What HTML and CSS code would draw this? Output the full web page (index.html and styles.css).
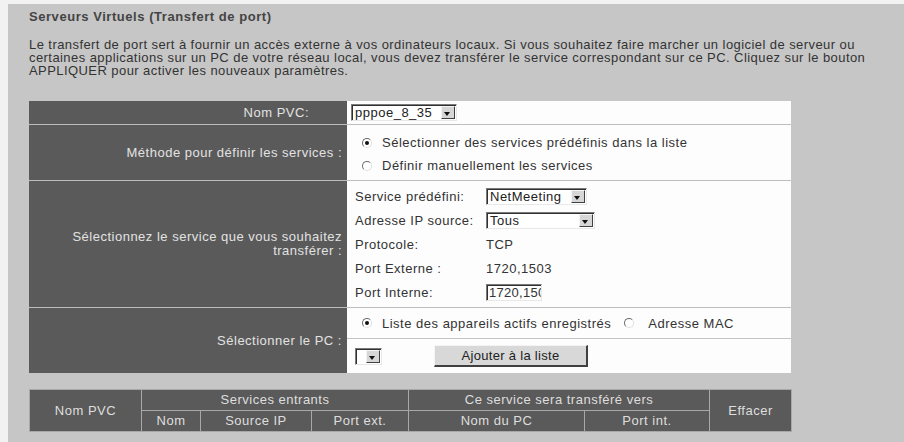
FILE: index.html
```html
<!DOCTYPE html>
<html lang="fr">
<head>
<meta charset="utf-8">
<title>Serveurs Virtuels</title>
<link rel="stylesheet" href="styles.css">
</head>
<body>
<div class="page">
  <h1 class="title">Serveurs Virtuels (Transfert de port)</h1>
  <p class="intro">Le transfert de port sert à fournir un accès externe à vos ordinateurs locaux. Si vous souhaitez faire marcher un logiciel de serveur ou certaines applications sur un PC de votre réseau local, vous devez transférer le service correspondant sur ce PC. Cliquez sur le bouton APPLIQUER pour activer les nouveaux paramètres.</p>

  <div class="form">
    <div class="lbl lbl-pvc">Nom PVC:</div>
    <div class="val val-pvc">
      <span class="sel sel-pvc"><span class="sel-text">pppoe_8_35</span><span class="arrow"></span></span>
    </div>

    <div class="lbl">Méthode pour définir les services :</div>
    <div class="val val-method">
      <label class="radio-line"><span class="radio on"></span>Sélectionner des services prédéfinis dans la liste</label>
      <label class="radio-line"><span class="radio"></span>Définir manuellement les services</label>
    </div>

    <div class="lbl">Sélectionnez le service que vous souhaitez<br>transférer :</div>
    <div class="val val-service">
      <span>Service prédéfini:</span>
      <span><span class="sel sel-svc"><span class="sel-text">NetMeeting</span><span class="arrow"></span></span></span>
      <span>Adresse IP source:</span>
      <span><span class="sel sel-ip"><span class="sel-text">Tous</span><span class="arrow"></span></span></span>
      <span>Protocole:</span>
      <span>TCP</span>
      <span>Port Externe :</span>
      <span>1720,1503</span>
      <span>Port Interne:</span>
      <span><span class="input">1720,1503</span></span>
    </div>

    <div class="lbl">Sélectionner le PC :</div>
    <div class="val val-pc">
      <div class="pc-top">
        <label class="radio-line"><span class="radio on"></span>Liste des appareils actifs enregistrés</label>
        <label class="radio-line mac"><span class="radio"></span>Adresse MAC</label>
      </div>
      <div class="pc-bottom">
        <span class="sel sel-pc"><span class="sel-text"></span><span class="arrow"></span></span>
        <span class="btn">Ajouter à la liste</span>
      </div>
    </div>
  </div>

  <table class="list">
    <colgroup>
      <col class="c1"><col class="c2"><col class="c3"><col class="c4"><col class="c5"><col class="c6"><col class="c7">
    </colgroup>
    <tr>
      <th rowspan="2">Nom PVC</th>
      <th colspan="3">Services entrants</th>
      <th colspan="2">Ce service sera transféré vers</th>
      <th rowspan="2">Effacer</th>
    </tr>
    <tr>
      <th>Nom</th>
      <th>Source IP</th>
      <th>Port ext.</th>
      <th>Nom du PC</th>
      <th>Port int.</th>
    </tr>
  </table>
</div>
</body>
</html>
```

FILE: styles.css
```css
html, body {
  margin: 0;
  padding: 0;
  height: 100%;
  background: #f2f2f2;
  overflow: hidden;
}

body {
  padding: 4px 0 0 8px;
  box-sizing: border-box;
  font-family: "Liberation Sans", Arial, sans-serif;
  font-size: 13px;
  letter-spacing: 0.5px;
  color: #333;
}

.page {
  background: #c6c6c6;
  height: 100%;
  padding: 6px 0 0 21px;
  box-sizing: border-box;
}

.title {
  margin: 0;
  font-size: 13px;
  line-height: 14px;
  font-weight: bold;
  color: #444;
  letter-spacing: 0.55px;
}

.intro {
  margin: 14px 0 0 0;
  line-height: 13px;
  width: 850px;
  color: #333;
  letter-spacing: 0.43px;
}

.form {
  margin-top: 24px;
  width: 762px;
  display: grid;
  grid-template-columns: 318px 444px;
  grid-template-rows: 23px 55px 126px 65px;
  row-gap: 1px;
  background: #bdbdbd;
}

.lbl {
  background: #5a5a5a;
  color: #e2e2e2;
  display: flex;
  align-items: center;
  justify-content: flex-end;
  text-align: right;
  padding-right: 5px;
  line-height: 14px;
}

.lbl-pvc {
  padding-right: 38px;
}

.val {
  background: #fdfdfd;
}

.val-pvc {
  display: flex;
  align-items: center;
  padding-left: 4px;
}

/* fake classic select */
.sel {
  display: inline-flex;
  align-items: stretch;
  height: 17px;
  box-sizing: border-box;
  border-top: 1px solid #7a7a7a;
  border-left: 1px solid #7a7a7a;
  border-right: 1px solid #e8e8e8;
  border-bottom: 1px solid #e8e8e8;
  box-shadow: inset 1px 1px 0 #303030;
  background: #fff;
  vertical-align: middle;
  overflow: hidden;
}
.sel-text {
  flex: 1;
  min-width: 0;
  overflow: hidden;
  padding-left: 3px;
  line-height: 15px;
  color: #222;
  white-space: nowrap;
}
.arrow {
  flex: 0 0 14px;
  width: 14px;
  margin: 1px 1px 1px 0;
  background: #d6d6d6;
  border-top: 1px solid #f4f4f4;
  border-left: 1px solid #f4f4f4;
  border-right: 1px solid #404040;
  border-bottom: 1px solid #404040;
  box-sizing: border-box;
  position: relative;
}
.arrow::after {
  content: "";
  position: absolute;
  left: 2px;
  top: 5px;
  border-left: 3.5px solid transparent;
  border-right: 3.5px solid transparent;
  border-top: 4px solid #111;
}

.sel-pvc { width: 106px; }
.sel-svc { width: 101px; }
.sel-ip { width: 109px; }
.sel-pc { width: 27px; }

/* radios */
.radio-line {
  display: flex;
  align-items: center;
  height: 23px;
  color: #333;
  white-space: nowrap;
}
.radio {
  display: inline-block;
  width: 10px;
  height: 10px;
  border-radius: 50%;
  box-sizing: border-box;
  border: 1px solid;
  border-color: #6a6a6a #e0e0e0 #e0e0e0 #6a6a6a;
  background: #fff;
  margin: 0 10px 0 0;
  position: relative;
}
.radio.on::after {
  content: "";
  position: absolute;
  left: 2px;
  top: 2px;
  width: 4px;
  height: 4px;
  border-radius: 50%;
  background: #111;
}

.val-method {
  padding: 6px 0 0 15px;
  box-sizing: border-box;
}

.val-service {
  display: grid;
  grid-template-columns: 131px 1fr;
  grid-auto-rows: 24px;
  align-items: center;
  padding: 3px 0 0 8px;
  color: #333;
}

.input {
  display: inline-block;
  width: 56px;
  height: 17px;
  box-sizing: border-box;
  border-top: 1px solid #7a7a7a;
  border-left: 1px solid #7a7a7a;
  border-right: 1px solid #e8e8e8;
  border-bottom: 1px solid #e8e8e8;
  box-shadow: inset 1px 1px 0 #303030;
  padding-left: 2px;
  line-height: 15px;
  overflow: hidden;
  white-space: nowrap;
  vertical-align: middle;
  letter-spacing: 0.3px;
}

.val-pc {
  display: grid;
  grid-template-rows: 31px 34px;
}
.pc-top {
  display: flex;
  align-items: center;
  padding-left: 15px;
  border-bottom: 1px solid #c4c4c4;
}
.pc-top .radio-line.mac {
  margin-left: 13px;
}
.pc-top .radio-line.mac .radio {
  margin-right: 14px;
}
.pc-bottom {
  display: flex;
  align-items: center;
  padding-left: 8px;
}
.btn {
  display: inline-flex;
  align-items: center;
  justify-content: center;
  margin-left: 52px;
  width: 154px;
  height: 22px;
  box-sizing: border-box;
  background: #d8d8d8;
  border-top: 1px solid #f4f4f4;
  border-left: 1px solid #f4f4f4;
  border-right: 2px solid #404040;
  border-bottom: 2px solid #404040;
  color: #222;
  letter-spacing: 0.3px;
}

/* list table */
.list {
  margin-top: 16px;
  border-collapse: collapse;
  width: 762px;
  table-layout: fixed;
}
.list .c1 { width: 112px; }
.list .c2 { width: 59px; }
.list .c3 { width: 111px; }
.list .c4 { width: 97px; }
.list .c5 { width: 176px; }
.list .c6 { width: 125px; }
.list .c7 { width: 82px; }
.list th {
  background: #5a5a5a;
  color: #dedede;
  font-weight: normal;
  border: 1px solid #a8a8a8;
  height: 20px;
  padding: 0;
  line-height: 14px;
  text-align: center;
}
```
